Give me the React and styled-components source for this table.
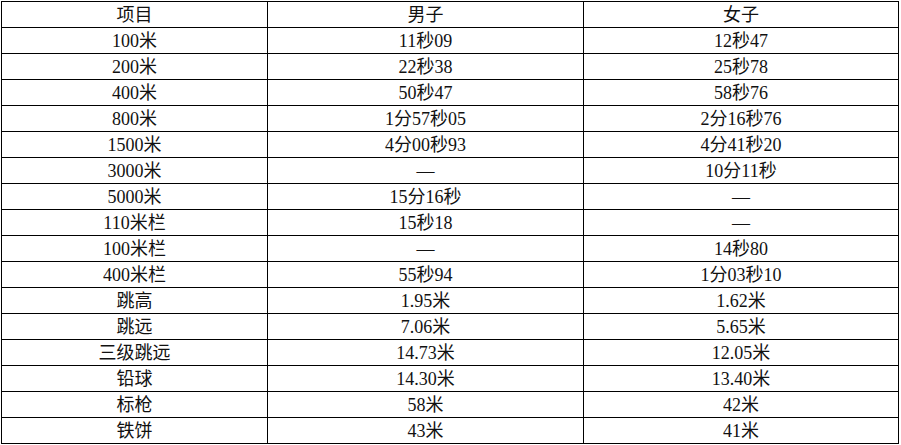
import React from "react"
import styled, { createGlobalStyle } from "styled-components"

const GlobalStyle = createGlobalStyle`
body {
  margin: 0;
  background: white;
}
`

const Table = styled.div`
margin: 1px 0 0 1px;
display: grid;
grid-template-columns: 266px 316px 315px;
grid-auto-rows: 26px;
width: max-content;
border-left: 1px solid #000;
border-top: 1px solid #000;
font-family: "Liberation Serif", "Noto Sans CJK SC", serif;
font-size: 18px;
color: #111;
`

const Cell = styled.div`
display: flex;
align-items: center;
justify-content: center;
border-right: 1px solid #000;
border-bottom: 1px solid #000;
line-height: 1;
white-space: nowrap;
`

const rows = [
  ["项目", "男子", "女子"],
  ["100米", "11秒09", "12秒47"],
  ["200米", "22秒38", "25秒78"],
  ["400米", "50秒47", "58秒76"],
  ["800米", "1分57秒05", "2分16秒76"],
  ["1500米", "4分00秒93", "4分41秒20"],
  ["3000米", "—", "10分11秒"],
  ["5000米", "15分16秒", "—"],
  ["110米栏", "15秒18", "—"],
  ["100米栏", "—", "14秒80"],
  ["400米栏", "55秒94", "1分03秒10"],
  ["跳高", "1.95米", "1.62米"],
  ["跳远", "7.06米", "5.65米"],
  ["三级跳远", "14.73米", "12.05米"],
  ["铅球", "14.30米", "13.40米"],
  ["标枪", "58米", "42米"],
  ["铁饼", "43米", "41米"],
]

function App() {
  return (
    <>
      <GlobalStyle />
      <Table>
        {rows.map((row, i) =>
          row.map((text, j) => <Cell key={i + "-" + j}>{text}</Cell>)
        )}
      </Table>
    </>
  )
}

export default App
